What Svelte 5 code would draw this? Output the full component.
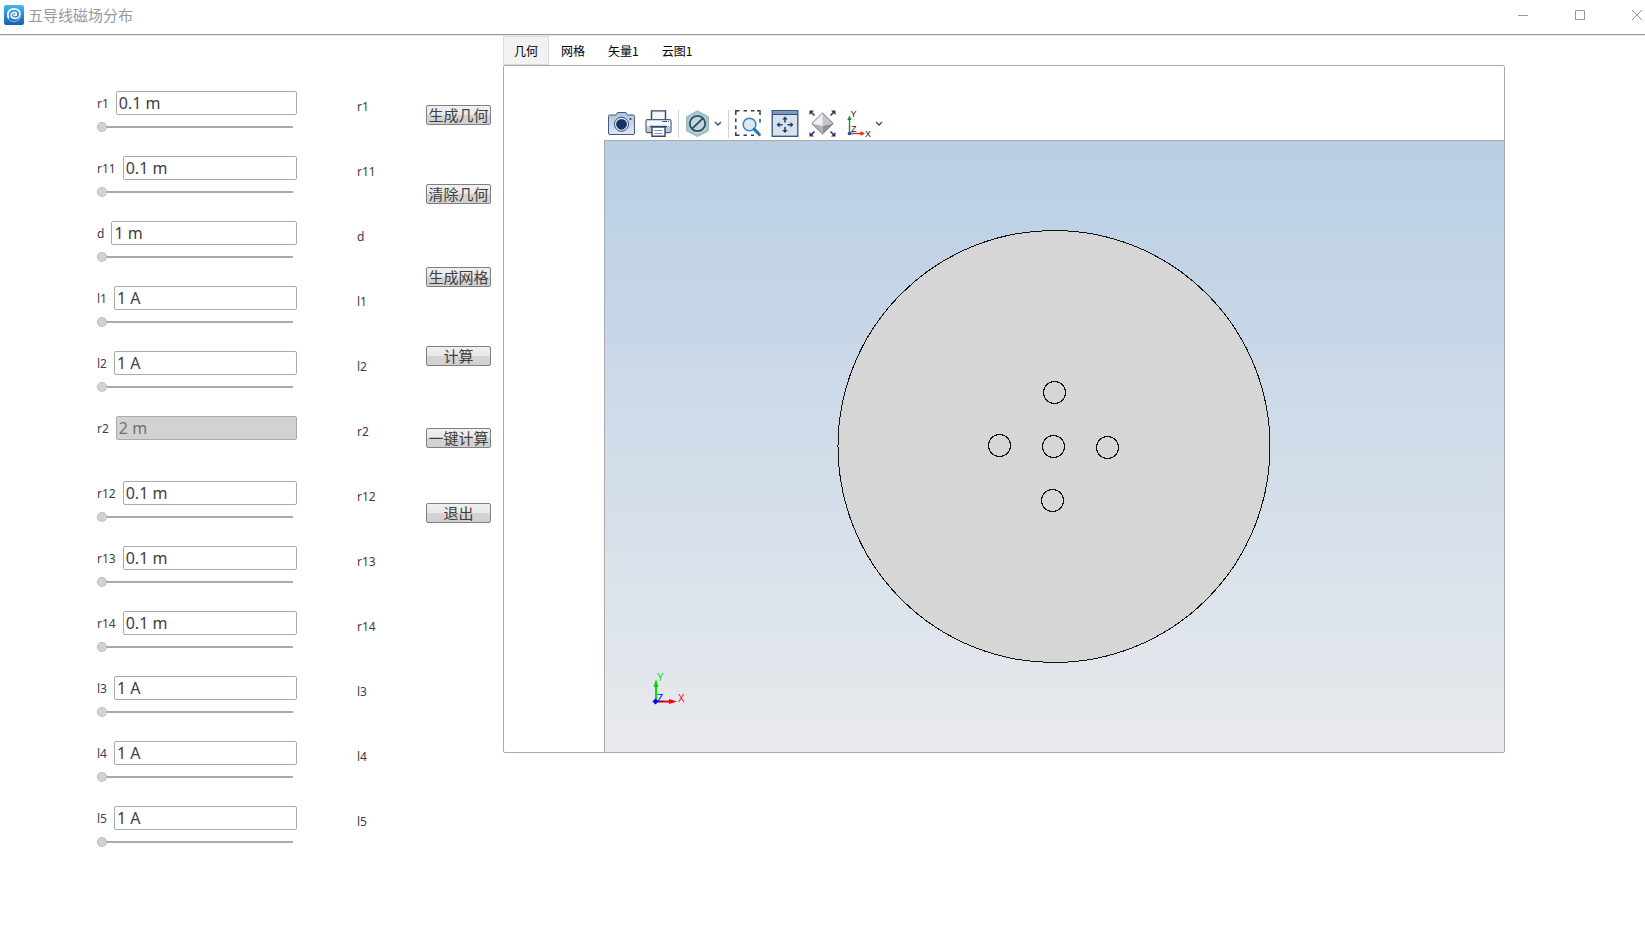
<script lang="ts">
  /**
   * Five-conductor magnetic field app: parameter form on the left, action
   * buttons, and a tabbed graphics panel showing the geometry.
   */

  interface Param {
    name: string;
    value: string;
    /** Derived parameters are read-only and have no slider. */
    derived?: boolean;
  }

  interface Conductor {
    x: number;
    y: number;
  }

  let params: Param[] = $state([
    { name: 'r1', value: '0.1 m' },
    { name: 'r11', value: '0.1 m' },
    { name: 'd', value: '1 m' },
    { name: 'l1', value: '1 A' },
    { name: 'l2', value: '1 A' },
    { name: 'r2', value: '2 m', derived: true },
    { name: 'r12', value: '0.1 m' },
    { name: 'r13', value: '0.1 m' },
    { name: 'r14', value: '0.1 m' },
    { name: 'l3', value: '1 A' },
    { name: 'l4', value: '1 A' },
    { name: 'l5', value: '1 A' },
  ]);

  const actions = ['生成几何', '清除几何', '生成网格', '计算', '一键计算', '退出'];
  const tabs = ['几何', '网格', '矢量1', '云图1'];

  const conductors: Conductor[] = [
    { x: 449.5, y: 251.5 },
    { x: 394.5, y: 304.5 },
    { x: 448.5, y: 305.5 },
    { x: 502.5, y: 306.5 },
    { x: 447.5, y: 359.5 },
  ];

  let activeTab = $state(tabs[0]);
</script>

{#snippet chevron()}
  <svg width="10" height="28" viewBox="0 0 10 28" aria-hidden="true">
    <path d="M2 12 L5 15 L8 12" fill="none" stroke="#3f5a66" stroke-width="1.5" />
  </svg>
{/snippet}

<div class="app">
  <header class="titlebar">
    <svg width="20" height="20" viewBox="0 0 20 20" aria-hidden="true">
      <defs>
        <linearGradient id="logo" x1="0" y1="0" x2="0" y2="1">
          <stop offset="0" stop-color="#48b4f0" />
          <stop offset="1" stop-color="#1560b0" />
        </linearGradient>
      </defs>
      <rect width="20" height="20" rx="2" fill="url(#logo)" />
      <path
        d="M4 13 A7 7 0 0 0 16.8 11.5"
        fill="none"
        stroke="#8cc6ee"
        stroke-width="0.9"
      />
      <path
        d="M4.3 12.6 C2.6 7.6 5.6 3.8 10 3.8 C14 3.8 16.2 6.2 16 9 C15.7 12.2 13 13.6 10.6 13.4 C8 13.2 6.8 11.4 7.2 9.6 C7.8 7.2 11.8 6.6 12.4 8.8 C12.6 10.2 11 10.9 10 10.2"
        fill="none"
        stroke="#fff"
        stroke-width="1.7"
        stroke-linecap="round"
      />
    </svg>
    <h1>五导线磁场分布</h1>
    <div class="window-controls">
      <button type="button" aria-label="最小化">
        <svg width="10" height="10" viewBox="0 0 10 10"><path d="M0 5.5 H10" /></svg>
      </button>
      <button type="button" aria-label="最大化">
        <svg width="10" height="10" viewBox="0 0 10 10"><path d="M0.5 0.5 H9.5 V9.5 H0.5 Z" /></svg>
      </button>
      <button type="button" aria-label="关闭">
        <svg width="10" height="10" viewBox="0 0 10 10"><path d="M0 0 L10 10 M10 0 L0 10" /></svg>
      </button>
    </div>
  </header>

  <main>
    <form class="params">
      {#each params as param (param.name)}
        <div class="param">
          <div class="field">
            <label for={`param-${param.name}`}>{param.name}</label>
            <input
              type="text"
              id={`param-${param.name}`}
              bind:value={param.value}
              disabled={param.derived}
            />
          </div>
          {#if !param.derived}
            <input type="range" min="0" max="100" value="0" aria-label={param.name} />
          {/if}
        </div>
      {/each}
    </form>

    <div class="notes">
      {#each params as param (param.name)}
        <span>{param.name}</span>
      {/each}
    </div>

    <div class="actions">
      {#each actions as action (action)}
        <button type="button">{action}</button>
      {/each}
    </div>

    <section class="graphics">
      <div class="tabs" role="tablist">
        {#each tabs as tab (tab)}
          <button
            type="button"
            role="tab"
            class:active={tab === activeTab}
            aria-selected={tab === activeTab}
            onclick={() => (activeTab = tab)}
          >
            {tab}
          </button>
        {/each}
      </div>

      <div class="panel" role="tabpanel">
        <div class="toolbar" role="toolbar">
          <div class="group">
            <button type="button" aria-label="图像快照">
              <svg width="28" height="28" viewBox="0 0 28 28">
                <defs>
                  <linearGradient id="body" x1="0" y1="0" x2="0" y2="1">
                    <stop offset="0" stop-color="#a9c4de" />
                    <stop offset="1" stop-color="#dce9f5" />
                  </linearGradient>
                </defs>
                <path
                  d="M1.5 5 H8 L9.5 2.5 H18 L19.5 5 H25 Q26.5 5 26.5 6.5 V23 Q26.5 24.5 25 24.5 H2 Q0.5 24.5 0.5 23 V6.5 Q0.5 5 1.5 5 Z"
                  fill="url(#body)"
                  stroke="#44597f"
                />
                <circle cx="13.5" cy="14.3" r="7" fill="#e6f0f8" stroke="#34486f" />
                <circle cx="13.5" cy="14.3" r="5.4" fill="#1c2f66" />
                <circle cx="22.5" cy="9" r="1" fill="#25386a" />
              </svg>
            </button>
            <button type="button" aria-label="打印">
              <svg width="28" height="28" viewBox="0 0 28 28">
                <path d="M6.5 10 V0.9 H20.5 V10" fill="#f2f5fa" stroke="#33456e" stroke-width="1.4" />
                <rect x="1" y="9.7" width="25" height="13" rx="1.5" fill="#f5f7fa" stroke="#4c5d83" stroke-width="1.2" />
                <path d="M2 16 H25 V22 H2 Z" fill="#bdc6d5" />
                <path d="M17.5 11.5 H22 M23 11.5 H24" stroke="#33456e" />
                <path d="M5 16.5 H22" stroke="#33456e" stroke-width="1.4" />
                <path d="M7 17 H20 V26.3 H7 Z" fill="#fff" stroke="#33456e" stroke-width="1.4" />
                <path d="M9.5 20.5 H17.5 M9.5 23.5 H17.5" stroke="#7f94b5" />
              </svg>
            </button>
          </div>
          <span class="separator"></span>
          <div class="menu">
            <button type="button" aria-label="选择">
              <svg width="28" height="28" viewBox="0 0 28 28">
                <path d="M13.5 0.8 L24.5 6.8 V20.8 L13.5 26.6 L2.5 20.8 V6.8 Z" fill="#adc3ca" stroke="#9ab3bc" />
                <path d="M13.5 4 L22 8.5 V19 L13.5 23.8 L5 19 V8.5 Z" fill="#c5d6db" />
                <circle cx="13.5" cy="13.5" r="7.7" fill="none" stroke="#1f5266" stroke-width="1.8" />
                <path d="M8.2 18.7 L18.8 8.3" stroke="#1f5266" stroke-width="1.8" />
              </svg>
            </button>
            <button type="button" aria-label="选择菜单">{@render chevron()}</button>
          </div>
          <span class="separator"></span>
          <div class="group">
            <button type="button" aria-label="框选缩放">
              <svg width="28" height="28" viewBox="0 0 28 28">
                <path
                  d="M1.8 5 V0.8 H5.5 M9.5 0.8 H13 M17 0.8 H20.5 M23 0.8 H26 V5 M26 9 V12.5 M1.8 8.5 V12 M1.8 15.5 V19 M1.8 22 V25.2 H5.5 M9.5 25.2 H13 M17 25.2 H20"
                  fill="none"
                  stroke="#2c3c68"
                  stroke-width="1.5"
                />
                <circle cx="15.5" cy="14.5" r="6.3" fill="#dce9f4" stroke="#3a83bb" stroke-width="1.5" />
                <path d="M20.2 19.2 L25.3 24.5" stroke="#2978b5" stroke-width="3.2" stroke-linecap="round" />
              </svg>
            </button>
            <button type="button" aria-label="缩放到窗口大小">
              <svg width="28" height="28" viewBox="0 0 28 28">
                <rect x="1.2" y="0.7" width="25.6" height="25.6" fill="#d7e2ef" stroke="#384c77" stroke-width="1.3" />
                <rect x="1.8" y="1.2" width="24.4" height="3" fill="#7898c1" />
                <path d="M1.5 4.5 H26.5" stroke="#384c77" />
                <path
                  d="M14 8.5 V12.5 M14 17 V21 M7.5 14.8 H11.5 M16.5 14.8 H20.5"
                  stroke="#263864"
                  stroke-width="1.5"
                />
                <path
                  d="M14 6.5 L16.8 9.5 H11.2 Z M14 23 L16.8 20 H11.2 Z M5.5 14.8 L8.5 12 V17.6 Z M22.5 14.8 L19.5 12 V17.6 Z"
                  fill="#263864"
                />
              </svg>
            </button>
            <button type="button" aria-label="缩放到选择">
              <svg width="28" height="28" viewBox="0 0 28 28">
                <path d="M14.5 3 L3.8 13.5 L14.5 16 Z" fill="#f0f0f1" />
                <path d="M14.5 3 L25.2 13.5 L14.5 16 Z" fill="#c4c5c8" />
                <path d="M3.8 13.5 L14.5 16 V24 Z" fill="#b2b4b7" />
                <path d="M25.2 13.5 L14.5 16 V24 Z" fill="#8e9195" />
                <path d="M14.5 3 L25.2 13.5 L14.5 24 L3.8 13.5 Z" fill="none" stroke="#6f757f" />
                <path
                  d="M3 2 L6.5 5.5 M26 2 L22.5 5.5 M3 25 L6.5 21.5 M26 25 L22.5 21.5"
                  stroke="#263864"
                  stroke-width="1.6"
                />
                <path
                  d="M1.5 0.5 H6 L1.5 5 Z M27.5 0.5 V5 L23 0.5 Z M1.5 26.5 V22 L6 26.5 Z M27.5 26.5 H23 L27.5 22 Z"
                  fill="#263864"
                />
              </svg>
            </button>
            <div class="menu">
              <button type="button" aria-label="转到 XY 视图">
                <svg width="28" height="28" viewBox="0 0 28 28">
                  <path d="M4.5 23.5 V9" stroke="#1d8c3a" stroke-width="1.4" />
                  <path d="M4.5 5.5 L6.7 10 H2.3 Z" fill="#1d8c3a" />
                  <path d="M4.5 23.5 H16" stroke="#e02626" stroke-width="1.4" />
                  <path d="M20 23.5 L15.5 21.3 V25.7 Z" fill="#e02626" />
                  <circle cx="4.5" cy="23.5" r="1.8" fill="#1f49a8" />
                  <text x="5.5" y="6.5" font-size="9">Y</text>
                  <text x="6" y="21.5" font-size="9">Z</text>
                  <text x="20" y="26.5" font-size="9">X</text>
                </svg>
              </button>
              <button type="button" aria-label="视图菜单">{@render chevron()}</button>
            </div>
          </div>
        </div>

        <div class="canvas">
          <svg viewBox="0 0 899 611" role="img" aria-label="几何">
            <circle class="domain" cx="449" cy="305.5" r="216" />
            {#each conductors as c}
              <circle class="domain" cx={c.x} cy={c.y} r="11" />
            {/each}

            <g class="triad">
              <path d="M51 560 V544" stroke="#00e000" stroke-width="2" />
              <path d="M51 538 L53.5 546 H48.5 Z" fill="#00d800" />
              <path d="M51 560.5 H64" stroke="#f00" stroke-width="2" />
              <path d="M72 560.5 L64 558 V563 Z" fill="#f00" />
              <path d="M50.5 557.5 L53.5 560.5 L50.5 563.5 L47.5 560.5 Z" fill="#00f" />
              <text x="52" y="540" fill="#00e000">Y</text>
              <text x="52" y="561" fill="#00f">Z</text>
              <text x="73" y="561" fill="#f00">X</text>
            </g>
          </svg>
        </div>
      </div>
    </section>
  </main>
</div>

<style>
  :global(body) {
    background: #fff;
  }

  .app {
    color: #404040;
    font-family: 'Noto Sans', 'Noto Sans CJK SC', sans-serif;
    font-size: 12px;
  }

  button,
  input {
    margin: 0;
    box-sizing: border-box;
    font-family: inherit;
    color: inherit;
  }

  svg {
    display: block;
  }

  /* Title bar */
  .titlebar {
    display: flex;
    align-items: center;
    height: 34px;
    margin-bottom: 1px;
    padding: 0 3px 0 4px;
    border-bottom: 1px solid #999;
    box-shadow: 0 1px #e8e8e8;
  }
  .titlebar > svg {
    margin-bottom: 4px;
  }
  h1 {
    margin: 0 auto 4px 4px;
    color: #999;
    font-family: 'Noto Sans CJK SC', sans-serif;
    font-size: 15px;
    font-weight: 400;
    line-height: 20px;
  }
  .window-controls {
    display: flex;
    gap: 47px;
    margin-bottom: 4px;
  }
  .window-controls button {
    padding: 0;
    border: 0;
    background: none;
  }
  .window-controls path {
    fill: none;
    stroke: #999;
  }

  main {
    display: flex;
    align-items: flex-start;
    padding: 0 140px 0 97px;
  }

  /* Parameter form */
  .params {
    flex: none;
    width: 200px;
    padding-top: 55px;
  }
  .param {
    height: 65px;
  }
  .field {
    display: flex;
    align-items: center;
    gap: 7px;
    margin-bottom: 7px;
  }
  .field input {
    flex: 1;
    min-width: 0;
    height: 24px;
    padding: 0 2px;
    border: 1px solid #aaa;
    border-radius: 2px;
    background: #fff;
    font-size: 16px;
  }
  .field input:disabled {
    background: #d2d2d2;
    color: #707070;
  }

  input[type='range'] {
    display: block;
    appearance: none;
    width: 196px;
    height: 10px;
    background: none;
  }
  input[type='range']::-webkit-slider-runnable-track {
    height: 2px;
    background: #aaa;
  }
  input[type='range']::-webkit-slider-thumb {
    appearance: none;
    width: 10px;
    height: 10px;
    margin-top: -4px;
    border: 1px dotted #aaa;
    border-radius: 50%;
    background: #d2d2d2;
  }

  .notes {
    display: flex;
    flex-direction: column;
    flex: none;
    gap: 49px;
    width: 69px;
    margin-left: 60px;
    padding-top: 63px;
    line-height: 16px;
  }

  /* Action buttons */
  .actions {
    display: grid;
    flex: none;
    grid-template-rows: 79px 83px 79px 82px 75px 20px;
    align-items: start;
    width: 65px;
    margin-right: 12px;
    padding-top: 69px;
  }
  .actions button {
    height: 20px;
    padding: 0;
    border: 1px solid #808080;
    border-radius: 2px;
    background: linear-gradient(#f0f0f0, #e8e8e8 50%, #d4d4d4 50%, #d0d0d0);
    font-family: 'Noto Sans CJK SC', sans-serif;
    font-size: 15px;
    line-height: 18px;
    white-space: nowrap;
  }

  /* Tabbed graphics */
  .graphics {
    flex: 1;
    min-width: 0;
  }
  .tabs {
    display: flex;
    gap: 1px;
  }
  .tabs button {
    height: 29px;
    padding: 0 10px;
    border: 1px solid transparent;
    background: none;
    color: #000;
    font-family: 'Noto Sans CJK SC', sans-serif;
    font-size: 12px;
  }
  .tabs button.active {
    border-color: #d9d9d9;
    background: #f2f2f2;
  }
  .panel {
    padding: 44px 0 0 100px;
    border: 1px solid #aaa;
    border-radius: 2px;
  }

  .toolbar {
    display: flex;
    align-items: center;
    gap: 5px;
    padding: 0 0 2px 4px;
  }
  .toolbar button {
    padding: 0;
    border: 0;
    background: none;
  }
  .group {
    display: flex;
    gap: 9px;
  }
  .menu {
    display: flex;
    gap: 1px;
  }
  .separator {
    width: 1px;
    height: 28px;
    background: #d0d0d0;
  }
  .toolbar text {
    fill: #222;
    font-family: 'Liberation Sans', sans-serif;
  }

  .canvas {
    border-top: 1px solid #aaa;
    border-left: 1px solid #aaa;
    background: linear-gradient(#b9cee5, #e8eaed);
  }
  .canvas svg {
    width: 100%;
    height: auto;
  }
  .domain {
    fill: #d6d6d6;
    stroke: #111;
    stroke-width: 1;
    shape-rendering: crispEdges;
  }
  .triad text {
    font-family: 'Liberation Sans', sans-serif;
    font-size: 10px;
  }
</style>
